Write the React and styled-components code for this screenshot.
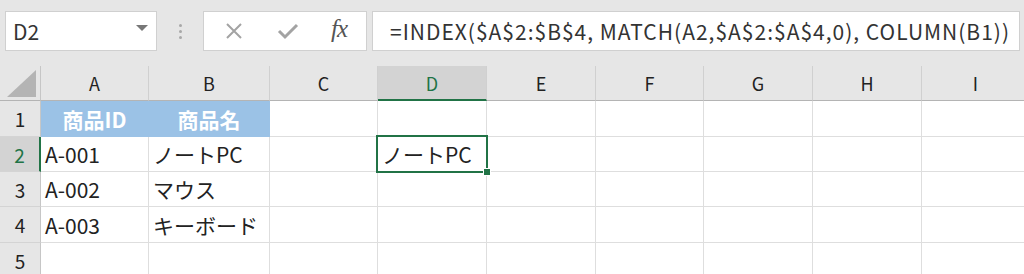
import React from 'react';
import styled, { createGlobalStyle } from 'styled-components';

const GlobalStyle = createGlobalStyle`
  html, body {
    margin: 0;
    padding: 0;
    background: #e6e6e6;
    overflow: hidden;
  }
  body {
    font-family: "Noto Sans CJK JP", "Noto Sans", sans-serif;
  }
`;

const GREEN = '#217346';

const Sheet = styled.div`
  width: 1024px;
  height: 274px;
  background: #e6e6e6;
  overflow: hidden;
`;

const Toolbar = styled.div`
  height: 66px;
  display: flex;
  align-items: flex-start;
  padding: 11px 0 0 5px;
  box-sizing: border-box;
`;

const NameBox = styled.div`
  width: 152px;
  height: 40px;
  box-sizing: border-box;
  background: #fff;
  border: 1px solid #d0d0d0;
  display: flex;
  align-items: center;
  justify-content: space-between;
  padding: 0 8px 0 7px;
  font-size: 21px;
  color: #333;
`;

const Caret = styled.span`
  width: 0;
  height: 0;
  border-left: 6px solid transparent;
  border-right: 6px solid transparent;
  border-top: 6px solid #777;
  margin-top: -6px;
`;

const Grip = styled.div`
  width: 46px;
  height: 40px;
  display: flex;
  flex-direction: column;
  align-items: center;
  justify-content: center;
  gap: 3px;

  span {
    width: 3px;
    height: 3px;
    border-radius: 50%;
    background: #a8a8a8;
  }
`;

const Buttons = styled.div`
  width: 164px;
  height: 40px;
  box-sizing: border-box;
  background: #fff;
  border: 1px solid #d0d0d0;
  display: flex;
  align-items: center;
  padding-left: 21px;
  gap: 34px;
`;

const Fx = styled.span`
  font-family: "Liberation Serif", "DejaVu Serif", serif;
  font-style: italic;
  font-size: 25px;
  color: #555;
  letter-spacing: -1px;
  margin-left: -2px;
  margin-top: -4px;
`;

const FormulaBox = styled.div`
  flex: 1;
  margin-left: 5px;
  margin-right: 4px;
  height: 40px;
  box-sizing: border-box;
  background: #fff;
  border: 1px solid #d0d0d0;
  display: flex;
  align-items: center;
  padding-left: 17px;
  font-size: 21px;
  letter-spacing: 1px;
  color: #333;
  white-space: nowrap;
  overflow: hidden;
`;

const cols = [41, 108, 121, 108, 109, 109, 108, 109, 109, 108];
const rowHeights = [35, 36, 35, 35, 36, 36];

const Grid = styled.div`
  display: grid;
  grid-template-columns: ${cols.map((c) => `${c}px`).join(' ')};
  grid-template-rows: ${rowHeights.map((r) => `${r}px`).join(' ')};
`;

const Corner = styled.div`
  background: #e6e6e6;
  border-right: 1px solid #c6c6c6;
  border-bottom: 1px solid #b4b4b4;
  display: flex;
  align-items: flex-end;
  justify-content: flex-end;
  padding: 0 4px 3px 0;
  box-sizing: border-box;

  &::after {
    content: '';
    width: 0;
    height: 0;
    border-left: 29px solid transparent;
    border-bottom: 27px solid #b4b4b4;
  }
`;

const ColHead = styled.div`
  background: ${(p) => (p.$active ? '#d3d3d3' : '#e6e6e6')};
  color: ${(p) => (p.$active ? GREEN : '#222')};
  border-right: 1px solid #d0d0d0;
  border-bottom: ${(p) => (p.$active ? `2px solid ${GREEN}` : '1px solid #b4b4b4')};
  box-sizing: border-box;
  display: flex;
  align-items: center;
  justify-content: center;
  font-size: 18px;
  padding-top: ${(p) => (p.$active ? '1px' : '0')};
`;

const RowHead = styled.div`
  background: ${(p) => (p.$active ? '#d3d3d3' : '#e6e6e6')};
  color: ${(p) => (p.$active ? GREEN : '#222')};
  border-right: ${(p) => (p.$active ? `2px solid ${GREEN}` : '1px solid #c6c6c6')};
  border-bottom: 1px solid #d4d4d4;
  box-sizing: border-box;
  display: flex;
  align-items: center;
  justify-content: center;
  font-size: 19px;
`;

const Cell = styled.div`
  position: relative;
  background: ${(p) => (p.$head ? '#9bc2e6' : '#fff')};
  color: ${(p) => (p.$head ? '#fff' : '#222')};
  font-weight: ${(p) => (p.$head ? 700 : 400)};
  border-right: 1px solid ${(p) => (p.$head ? '#9bc2e6' : '#dedede')};
  border-bottom: 1px solid ${(p) => (p.$head ? '#9bc2e6' : '#dedede')};
  box-sizing: border-box;
  display: flex;
  align-items: center;
  justify-content: ${(p) => (p.$head ? 'center' : 'flex-start')};
  padding-left: ${(p) => (p.$head ? '0' : '4px')};
  font-size: 21px;
  white-space: nowrap;
  z-index: ${(p) => (p.$selected ? 2 : 'auto')};
`;

const Selection = styled.div`
  position: absolute;
  left: -2px;
  top: -2px;
  right: -2px;
  bottom: -2px;
  border: 2px solid ${GREEN};
  pointer-events: none;

  &::after {
    content: '';
    position: absolute;
    right: -5px;
    bottom: -5px;
    width: 6px;
    height: 6px;
    background: ${GREEN};
    border: 1px solid #fff;
  }
`;

const XIcon = () => (
  <svg width="18" height="18" viewBox="0 0 18 18">
    <path d="M2 2 L16 16 M16 2 L2 16" stroke="#a3a3a3" strokeWidth="2" fill="none" />
  </svg>
);

const CheckIcon = () => (
  <svg width="22" height="18" viewBox="0 0 22 18">
    <path d="M2 9 L8 15 L20 3" stroke="#a3a3a3" strokeWidth="3" fill="none" />
  </svg>
);

const letters = ['A', 'B', 'C', 'D', 'E', 'F', 'G', 'H', 'I'];

const data = [
  ['商品ID', '商品名'],
  ['A-001', 'ノートPC'],
  ['A-002', 'マウス'],
  ['A-003', 'キーボード'],
  ['', ''],
];

const App = () => (
  <Sheet>
    <GlobalStyle />
    <Toolbar>
      <NameBox>
        <span>D2</span>
        <Caret />
      </NameBox>
      <Grip>
        <span />
        <span />
        <span />
      </Grip>
      <Buttons>
        <XIcon />
        <CheckIcon />
        <Fx>fx</Fx>
      </Buttons>
      <FormulaBox>=INDEX($A$2:$B$4, MATCH(A2,$A$2:$A$4,0), COLUMN(B1))</FormulaBox>
    </Toolbar>
    <Grid>
      <Corner />
      {letters.map((l) => (
        <ColHead key={l} $active={l === 'D'}>
          {l}
        </ColHead>
      ))}
      {data.map((row, r) => (
        <React.Fragment key={r}>
          <RowHead $active={r === 1}>{r + 1}</RowHead>
          {letters.map((l, c) => {
            const isHead = r === 0 && c < 2;
            const selected = l === 'D' && r === 1;
            const text = c < 2 ? row[c] : selected ? 'ノートPC' : '';
            return (
              <Cell key={l} $head={isHead} $selected={selected}>
                {text}
                {selected && <Selection />}
              </Cell>
            );
          })}
        </React.Fragment>
      ))}
    </Grid>
  </Sheet>
);

export default App;
